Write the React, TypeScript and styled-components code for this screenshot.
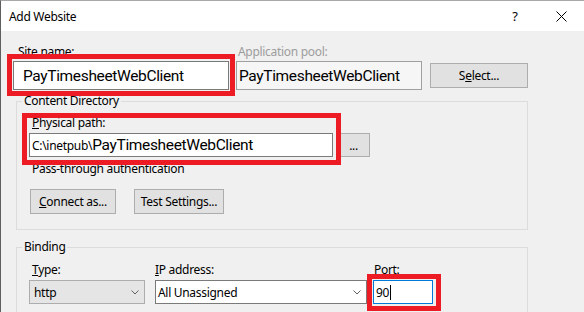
import styled, { createGlobalStyle } from 'styled-components';

const GlobalStyle = createGlobalStyle`
  html, body {
    margin: 0;
    padding: 0;
    background: #f0f0f0;
  }
  body {
    font-family: "Noto Sans", "Open Sans", sans-serif;
    font-size: 12px;
    letter-spacing: -0.3px;
    color: #000;
  }
`;

const DialogWindow = styled.div`
  width: 584px;
  height: 312px;
  box-sizing: border-box;
  overflow: hidden;
  border-left: 1px solid #5f5f5f;
  border-top: 1px solid #a8a8a8;
  background: #f0f0f0;
  display: flex;
  flex-direction: column;
`;

const TitleBar = styled.div`
  height: 30px;
  flex-shrink: 0;
  background: #fff;
  display: flex;
  align-items: center;
  padding-left: 8px;
`;

const TitleText = styled.div`
  flex: 1;
  font-size: 12px;
`;

const CaptionButton = styled.div`
  width: 46px;
  height: 30px;
  display: flex;
  align-items: center;
  justify-content: center;
  font-size: 13px;
`;

const DialogBody = styled.div`
  padding: 13px 0 0 12px;
  display: flex;
  flex-direction: column;
`;

const TopRow = styled.div`
  display: flex;
  align-items: flex-end;
`;

const Field = styled.div<{ $gap?: number; $ml?: number }>`
  display: flex;
  flex-direction: column;
  gap: ${(p) => p.$gap ?? 1}px;
  margin-left: ${(p) => p.$ml ?? 0}px;
`;

const Label = styled.div<{ $indent?: number; $disabled?: boolean }>`
  line-height: 16px;
  height: 16px;
  white-space: nowrap;
  padding-left: ${(p) => p.$indent ?? 0}px;
  color: ${(p) => (p.$disabled ? '#9d9d9d' : '#000')};
`;

const Highlight = styled.div<{ $t: number; $r: number; $b: number; $l: number }>`
  position: relative;
  &::after {
    content: '';
    position: absolute;
    top: ${(p) => p.$t}px;
    right: ${(p) => p.$r}px;
    bottom: ${(p) => p.$b}px;
    left: ${(p) => p.$l}px;
    border: 5px solid #ed1c24;
    pointer-events: none;
    z-index: 2;
  }
`;

const TextBox = styled.div<{ $w: number; $h: number; $pl?: number; $readOnly?: boolean; $focused?: boolean }>`
  box-sizing: border-box;
  width: ${(p) => p.$w}px;
  height: ${(p) => p.$h}px;
  border: 1px solid ${(p) => (p.$focused ? '#0078d7' : p.$readOnly ? '#a0a0a0' : '#7a7a7a')};
  background: ${(p) => (p.$readOnly ? '#f6f6f6' : '#fff')};
  display: flex;
  align-items: center;
  padding-left: ${(p) => p.$pl ?? 2}px;
  white-space: nowrap;
  overflow: hidden;
`;

const BigText = styled.span`
  font-family: Roboto, "Noto Sans", sans-serif;
  font-size: 15.5px;
  letter-spacing: -0.35px;
`;

const Caret = styled.span`
  display: inline-block;
  width: 1px;
  height: 15px;
  background: #000;
  margin-left: 1px;
`;

const PushButton = styled.div<{ $w: number; $h?: number; $ml?: number }>`
  box-sizing: border-box;
  width: ${(p) => p.$w}px;
  height: ${(p) => p.$h ?? 25}px;
  margin-left: ${(p) => p.$ml ?? 0}px;
  border: 1px solid #adadad;
  background: #e1e1e1;
  display: flex;
  align-items: center;
  justify-content: center;
  white-space: nowrap;
`;

const SelectButton = styled(PushButton)`
  align-self: flex-end;
  margin-bottom: 2px;
`;

const GroupBox = styled.fieldset<{ $mt: number }>`
  margin: ${(p) => p.$mt}px 0 0 3px;
  padding: 0;
  width: 512px;
  box-sizing: border-box;
  border: 1px solid #dcdcdc;
  min-width: 0;
`;

const GroupTitle = styled.legend`
  padding: 0 2px;
  margin-left: 5px;
  line-height: 16px;
`;

const GroupContent = styled.div<{ $pt: number; $pb: number }>`
  padding: ${(p) => p.$pt}px 0 ${(p) => p.$pb}px 12px;
  display: flex;
  flex-direction: column;
`;

const PathRow = styled.div`
  display: flex;
  align-items: flex-end;
  gap: 4px;
`;

const Note = styled.div`
  margin-top: 4px;
  padding-left: 3px;
  line-height: 16px;
`;

const ButtonRow = styled.div`
  display: flex;
  gap: 18px;
  margin-top: 12px;
`;

const BindingRow = styled.div`
  display: flex;
  align-items: flex-start;
`;

const ComboBox = styled.div<{ $w: number; $editable?: boolean }>`
  box-sizing: border-box;
  width: ${(p) => p.$w}px;
  height: 24px;
  border: 1px solid ${(p) => (p.$editable ? '#7a7a7a' : '#adadad')};
  background: ${(p) => (p.$editable ? '#fff' : '#e5e5e5')};
  display: flex;
  align-items: center;
  justify-content: space-between;
  padding: 0 5px 0 ${(p) => (p.$editable ? 2 : 4)}px;
`;

const Chevron = () => (
  <svg width="8" height="5" viewBox="0 0 8 5">
    <polyline points="0.5,0.5 4,4 7.5,0.5" fill="none" stroke="#606060" strokeWidth="1" />
  </svg>
);

const CloseGlyph = () => (
  <svg width="11" height="11" viewBox="0 0 11 11">
    <path d="M0.5 0.5 L10.5 10.5 M10.5 0.5 L0.5 10.5" stroke="#000" strokeWidth="1" />
  </svg>
);

export default function App() {
  return (
    <>
      <GlobalStyle />
      <DialogWindow>
        <TitleBar>
          <TitleText>Add Website</TitleText>
          <CaptionButton>?</CaptionButton>
          <CaptionButton>
            <CloseGlyph />
          </CaptionButton>
        </TitleBar>

        <DialogBody>
          <TopRow>
            <Field>
              <Label $indent={5}>Site name:</Label>
              <Highlight $t={-7} $r={-6} $b={-6} $l={-6}>
                <TextBox $w={216} $h={29} $pl={9}>
                  <BigText>PayTimesheetWebClient</BigText>
                </TextBox>
              </Highlight>
            </Field>
            <Field $ml={7}>
              <Label $indent={2} $disabled>
                Application pool:
              </Label>
              <TextBox $w={186} $h={29} $readOnly>
                <BigText>PayTimesheetWebClient</BigText>
              </TextBox>
            </Field>
            <SelectButton $w={98} $ml={8}>
              S<u>e</u>lect...
            </SelectButton>
          </TopRow>

          <GroupBox $mt={3}>
            <GroupTitle>Content Directory</GroupTitle>
            <GroupContent $pt={6} $pb={15}>
              <PathRow>
                <Highlight $t={-2} $r={-8} $b={-8} $l={-7}>
                  <Field $gap={2}>
                    <Label $indent={3}>
                      <u>P</u>hysical path:
                    </Label>
                    <TextBox $w={304} $h={24}>
                      C:\inetpub\<BigText>PayTimesheetWebClient</BigText>
                    </TextBox>
                  </Field>
                </Highlight>
                <PushButton $w={33} $h={24}>
                  ...
                </PushButton>
              </PathRow>
              <Note>Pass-through authentication</Note>
              <ButtonRow>
                <PushButton $w={86} $ml={1}>
                  <u>C</u>onnect as...
                </PushButton>
                <PushButton $w={90}>
                  Test Settin<u>g</u>s...
                </PushButton>
              </ButtonRow>
            </GroupContent>
          </GroupBox>

          <GroupBox $mt={9}>
            <GroupTitle>Binding</GroupTitle>
            <GroupContent $pt={7} $pb={20}>
              <BindingRow>
                <Field $gap={2}>
                  <Label $indent={3}>
                    <u>T</u>ype:
                  </Label>
                  <ComboBox $w={116}>
                    http
                    <Chevron />
                  </ComboBox>
                </Field>
                <Field $gap={2} $ml={10}>
                  <Label>
                    <u>I</u>P address:
                  </Label>
                  <ComboBox $w={212} $editable>
                    All Unassigned
                    <Chevron />
                  </ComboBox>
                </Field>
                <Field $gap={2} $ml={6}>
                  <Label $indent={1}>Port:</Label>
                  <Highlight $t={-6} $r={-8} $b={-7} $l={-6}>
                    <TextBox $w={60} $h={24} $focused>
                      90
                      <Caret />
                    </TextBox>
                  </Highlight>
                </Field>
              </BindingRow>
            </GroupContent>
          </GroupBox>
        </DialogBody>
      </DialogWindow>
    </>
  );
}
